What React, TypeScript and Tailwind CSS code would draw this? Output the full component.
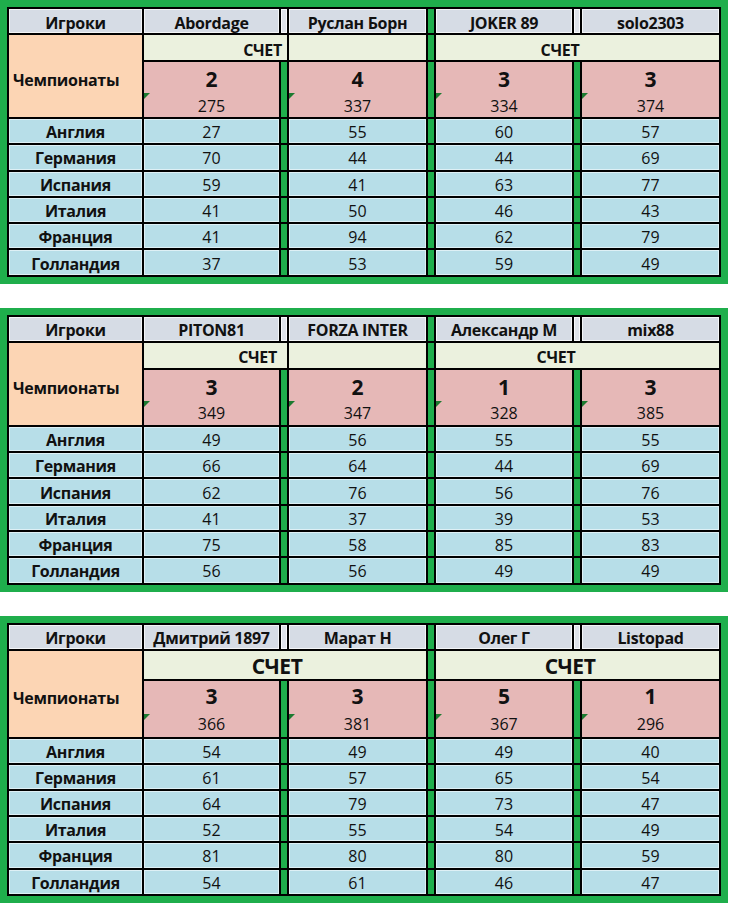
const COUNTRIES = ['Англия', 'Германия', 'Испания', 'Италия', 'Франция', 'Голландия'];

type TableData = {
  players: string[];
  scores: [number, number][];
  rows: number[][];
  big?: boolean;
};

const tables: TableData[] = [
  {
    players: ['Abordage', 'Руслан Борн', 'JOKER 89', 'solo2303'],
    scores: [[2, 275], [4, 337], [3, 334], [3, 374]],
    rows: [
      [27, 55, 60, 57],
      [70, 44, 44, 69],
      [59, 41, 63, 77],
      [41, 50, 46, 43],
      [41, 94, 62, 79],
      [37, 53, 59, 49],
    ],
  },
  {
    players: ['PITON81', 'FORZA INTER', 'Александр М', 'mix88'],
    scores: [[3, 349], [2, 347], [1, 328], [3, 385]],
    rows: [
      [49, 56, 55, 55],
      [66, 64, 44, 69],
      [62, 76, 56, 76],
      [41, 37, 39, 53],
      [75, 58, 85, 83],
      [56, 56, 49, 49],
    ],
  },
  {
    players: ['Дмитрий 1897', 'Марат Н', 'Олег Г', 'Listopad'],
    scores: [[3, 366], [3, 381], [5, 367], [1, 296]],
    rows: [
      [54, 49, 49, 40],
      [61, 57, 65, 54],
      [64, 79, 73, 47],
      [52, 55, 54, 49],
      [81, 80, 80, 59],
      [54, 61, 46, 47],
    ],
    big: true,
  },
];

const header =
  'bg-[#d6dce5] shadow-[inset_0_0_0_1px_rgba(255,255,255,0.7)] flex items-center justify-center pt-[3px] font-bold text-[16px] leading-none tracking-[-0.3px]';
const narrowGrey = 'bg-[#dfe3ea] shadow-[inset_0_0_0_1px_rgba(255,255,255,0.8)]';
const green = 'bg-[#1fae4c]';
const blue =
  'bg-[#b7dee8] shadow-[inset_0_0_0_1px_rgba(255,255,255,0.55)] flex items-center justify-center pt-[2px] text-[16px] leading-none';
const lightGreen = 'bg-[#ebf1de]';

function ScoreCell({ score, total, big }: { score: number; total: number; big?: boolean }) {
  return (
    <div className="relative bg-[#e6b8b7] flex flex-col leading-none">
      <div className={`${big ? 'h-[32px]' : 'h-[35px]'} flex items-center justify-center text-[21px] font-bold`}>
        {score}
      </div>
      <div className={`${big ? 'h-[25px]' : 'h-[17px]'} flex items-center justify-center text-[16px]`}>{total}</div>
      <svg
        className={`absolute left-0 ${big ? 'top-[33px]' : 'top-[31px]'}`}
        width="6"
        height="6"
        viewBox="0 0 6 6"
      >
        <polygon points="0,0 6,0 0,6" fill="#1c7a30" />
      </svg>
    </div>
  );
}

function ScoreTable({ data }: { data: TableData }) {
  const { players, scores, rows, big } = data;
  return (
    <div className="w-[728px] border-[7px] border-[#1fae4c]">
      <div
        className={`grid grid-cols-[133px_135px_6px_137px_6px_136px_6px_137px] gap-[2px] bg-black p-[2px] ${
          big ? 'grid-rows-[24px_28px_56px_repeat(6,24.2px)]' : 'grid-rows-[24px_25px_55px_repeat(6,24.3px)]'
        }`}
      >
        {/* Header */}
        <div className={header}>Игроки</div>
        <div className={header}>{players[0]}</div>
        <div className={narrowGrey}></div>
        <div className={header}>{players[1]}</div>
        <div className={green}></div>
        <div className={header}>{players[2]}</div>
        <div className={narrowGrey}></div>
        <div className={header}>{players[3]}</div>

        {/* Чемпионаты */}
        <div className="row-span-2 bg-[#fcd5b4] flex items-center pl-[4px] pt-[8px] font-bold text-[16px] leading-none tracking-[-0.3px]">
          Чемпионаты
        </div>

        {big ? (
          <>
            <div
              className={`col-span-3 ${lightGreen} flex items-center justify-center pr-[16px] pt-[3px] font-bold text-[21px] leading-none tracking-[-0.5px]`}
            >
              СЧЕТ
            </div>
            <div className={green}></div>
            <div
              className={`col-span-3 ${lightGreen} flex items-center justify-center pr-[15px] pt-[3px] font-bold text-[21px] leading-none tracking-[-0.5px]`}
            >
              СЧЕТ
            </div>
          </>
        ) : (
          <>
            <div
              className={`col-span-2 ${lightGreen} flex items-center justify-end pt-[4px] font-bold text-[16px] leading-none tracking-[-0.3px] ${
                players[0] === 'Abordage' ? 'pr-[5px]' : 'pr-[10px]'
              }`}
            >
              СЧЕТ
            </div>
            <div className={lightGreen}></div>
            <div className={green}></div>
            <div
              className={`col-span-3 ${lightGreen} flex items-center justify-center pt-[4px] font-bold text-[16px] leading-none tracking-[-0.3px] ${
                players[0] === 'Abordage' ? 'pr-[35px]' : 'pr-[43px]'
              }`}
            >
              СЧЕТ
            </div>
          </>
        )}

        {/* Scores */}
        <ScoreCell score={scores[0][0]} total={scores[0][1]} big={big} />
        <div className={green}></div>
        <ScoreCell score={scores[1][0]} total={scores[1][1]} big={big} />
        <div className={green}></div>
        <ScoreCell score={scores[2][0]} total={scores[2][1]} big={big} />
        <div className={green}></div>
        <ScoreCell score={scores[3][0]} total={scores[3][1]} big={big} />

        {/* Countries */}
        {rows.map((r, i) => (
          <div key={i} className="contents">
            <div className={`${blue} font-bold tracking-[-0.3px]`}>{COUNTRIES[i]}</div>
            <div className={blue}>{r[0]}</div>
            <div className={green}></div>
            <div className={blue}>{r[1]}</div>
            <div className={green}></div>
            <div className={blue}>{r[2]}</div>
            <div className={green}></div>
            <div className={blue}>{r[3]}</div>
          </div>
        ))}
      </div>
    </div>
  );
}

export default function App() {
  return (
    <div
      className="w-[730px] h-[905px] bg-white flex flex-col gap-[24px] text-[#111] overflow-hidden"
      style={{ fontFamily: '"Open Sans", "Noto Sans", sans-serif' }}
    >
      {tables.map((t, i) => (
        <ScoreTable key={i} data={t} />
      ))}
    </div>
  );
}
